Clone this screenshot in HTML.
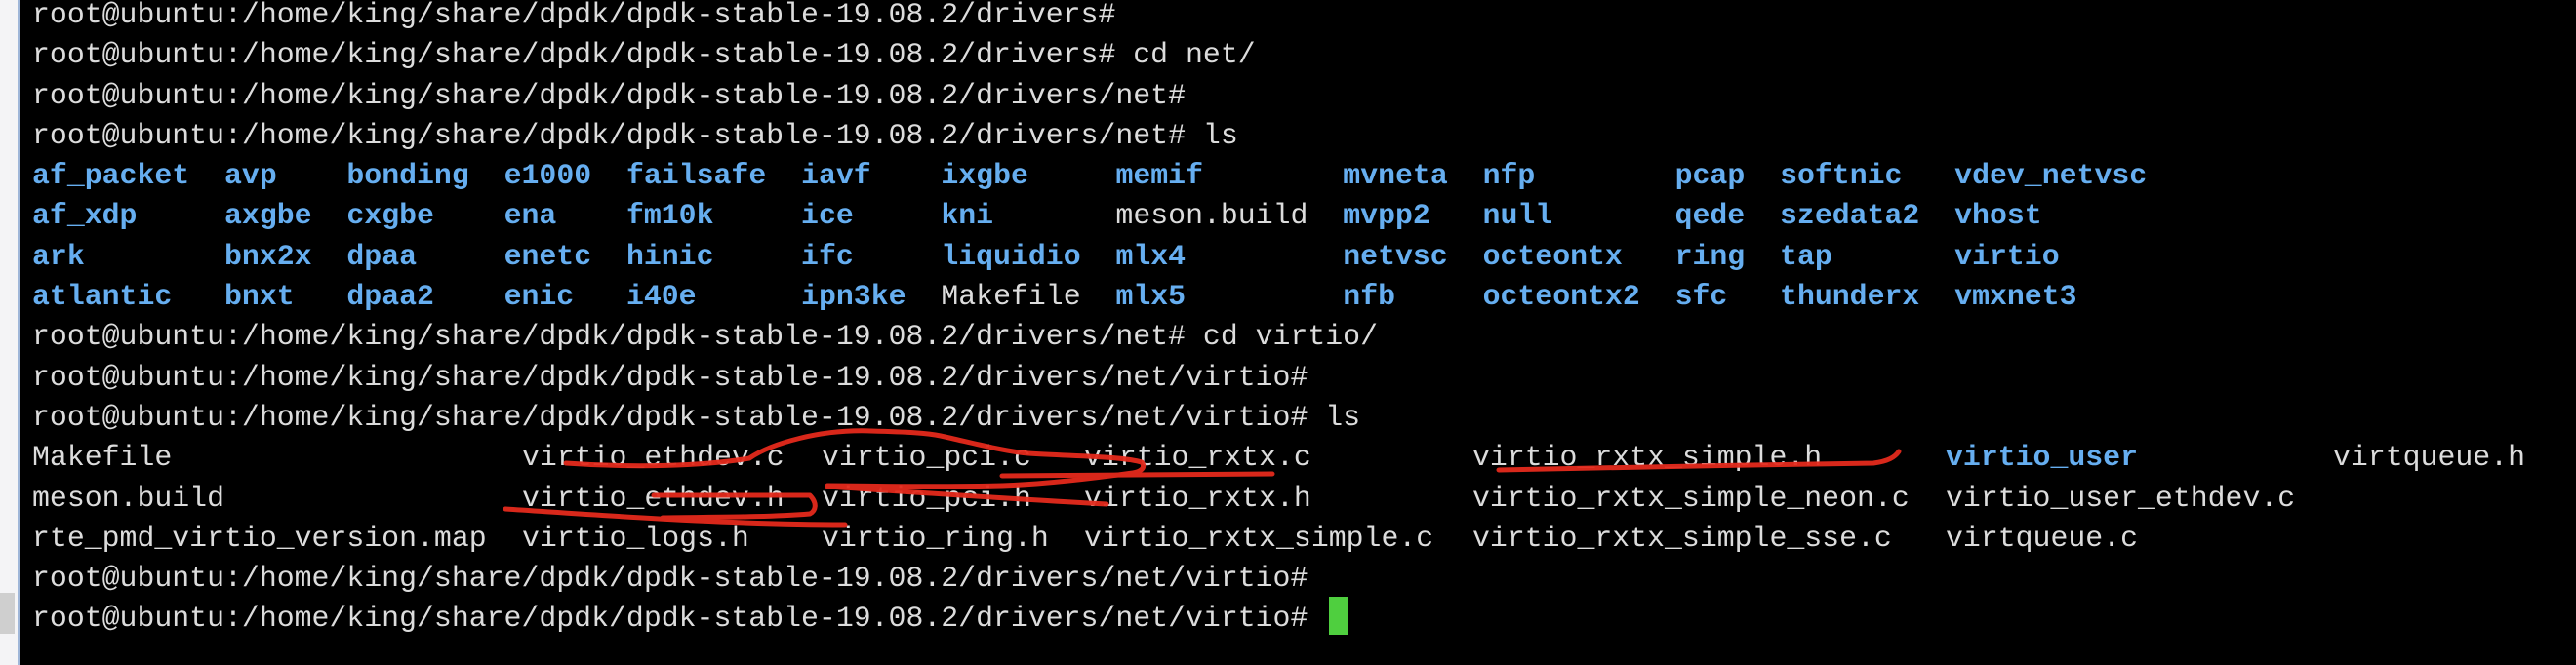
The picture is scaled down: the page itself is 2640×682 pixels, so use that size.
<!DOCTYPE html>
<html><head><meta charset="utf-8"><style>
html,body{margin:0;padding:0;width:2640px;height:682px;overflow:hidden;background:#000;}
#strip{position:absolute;left:0;top:0;width:19px;height:682px;background:#f4f4f6;}
#strip2{position:absolute;left:0;top:608px;width:15px;height:42px;background:#cfcfcf;}
#edge{position:absolute;left:18px;top:0;width:2px;height:682px;background:#9fb6d8;}
pre,.c{position:absolute;margin:0;font-family:"Liberation Mono",monospace;font-size:29.85px;line-height:41.3px;color:#dcdcdc;white-space:pre;}
pre{left:33px;top:-5px;}
.c{top:449.3px;}
b{color:#66aef0;font-weight:bold;}
#cur{position:absolute;left:1362px;top:612px;width:19px;height:39px;background:#4fcf3f;}
svg{position:absolute;left:0;top:0;}
</style></head><body>
<div id="strip"></div><div id="strip2"></div><div id="edge"></div>
<pre>root@ubuntu:/home/king/share/dpdk/dpdk-stable-19.08.2/drivers#
root@ubuntu:/home/king/share/dpdk/dpdk-stable-19.08.2/drivers# cd net/
root@ubuntu:/home/king/share/dpdk/dpdk-stable-19.08.2/drivers/net#
root@ubuntu:/home/king/share/dpdk/dpdk-stable-19.08.2/drivers/net# ls
<b>af_packet</b>  <b>avp</b>    <b>bonding</b>  <b>e1000</b>  <b>failsafe</b>  <b>iavf</b>    <b>ixgbe</b>     <b>memif</b>        <b>mvneta</b>  <b>nfp</b>        <b>pcap</b>  <b>softnic</b>   <b>vdev_netvsc</b>
<b>af_xdp</b>     <b>axgbe</b>  <b>cxgbe</b>    <b>ena</b>    <b>fm10k</b>     <b>ice</b>     <b>kni</b>       meson.build  <b>mvpp2</b>   <b>null</b>       <b>qede</b>  <b>szedata2</b>  <b>vhost</b>
<b>ark</b>        <b>bnx2x</b>  <b>dpaa</b>     <b>enetc</b>  <b>hinic</b>     <b>ifc</b>     <b>liquidio</b>  <b>mlx4</b>         <b>netvsc</b>  <b>octeontx</b>   <b>ring</b>  <b>tap</b>       <b>virtio</b>
<b>atlantic</b>   <b>bnxt</b>   <b>dpaa2</b>    <b>enic</b>   <b>i40e</b>      <b>ipn3ke</b>  Makefile  <b>mlx5</b>         <b>nfb</b>     <b>octeontx2</b>  <b>sfc</b>   <b>thunderx</b>  <b>vmxnet3</b>
root@ubuntu:/home/king/share/dpdk/dpdk-stable-19.08.2/drivers/net# cd virtio/
root@ubuntu:/home/king/share/dpdk/dpdk-stable-19.08.2/drivers/net/virtio#
root@ubuntu:/home/king/share/dpdk/dpdk-stable-19.08.2/drivers/net/virtio# ls
Makefile
meson.build
rte_pmd_virtio_version.map
root@ubuntu:/home/king/share/dpdk/dpdk-stable-19.08.2/drivers/net/virtio#
root@ubuntu:/home/king/share/dpdk/dpdk-stable-19.08.2/drivers/net/virtio# </pre>
<div class="c" style="left:535px">virtio_ethdev.c
virtio_ethdev.h
virtio_logs.h</div>
<div class="c" style="left:842px">virtio_pci.c
virtio_pci.h
virtio_ring.h</div>
<div class="c" style="left:1111px">virtio_rxtx.c
virtio_rxtx.h
virtio_rxtx_simple.c</div>
<div class="c" style="left:1509px">virtio_rxtx_simple.h
virtio_rxtx_simple_neon.c
virtio_rxtx_simple_sse.c</div>
<div class="c" style="left:1994px"><b>virtio_user</b>
virtio_user_ethdev.c
virtqueue.c</div>
<div class="c" style="left:2391px">virtqueue.h</div>
<div id="cur"></div>
<svg width="2640" height="682" viewBox="0 0 2640 682">
<g fill="none" stroke="#e42a1c" stroke-width="5" stroke-linecap="round" stroke-linejoin="round" opacity="0.95">
<path d="M580 475 C650 480 720 478 768 470 C790 455 840 440 893 442 C930 443 950 444 964 447 C1000 455 1030 463 1054 465 C1100 468 1150 468 1170 474 C1175 480 1168 484 1161 485 C1110 492 1060 497 1027 498 C950 500 890 498 848 498"/>
<path d="M1027 488 L1304 486"/>
<path d="M848 499 C940 505 1040 512 1134 517"/>
<path d="M670 508 L830 508 C838 516 836 524 830 527 C780 531 720 530 679 531"/>
<path d="M518 522 C580 526 650 531 714 534 C780 537 830 538 866 538"/>
<path d="M1536 482 C1650 479 1800 477 1920 475 C1935 473 1942 469 1946 463"/>
</g>
</svg>
</body></html>
